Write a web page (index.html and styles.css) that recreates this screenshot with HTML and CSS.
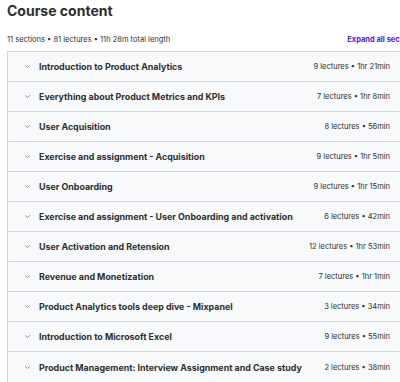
FILE: index.html
```html
<!DOCTYPE html>
<html lang="en">
<head>
    <meta charset="UTF-8">
    <meta name="viewport" content="width=device-width, initial-scale=1.0">
    <title>Course content</title>
    <link rel="stylesheet" href="styles.css">
</head>
<body>

    <h2 class="title">Course content</h2>

    <!-- Summary line + expand link -->
    <div class="summary">
        <span>11 sections • 81 lectures • 11h 28m total length</span>
        <button type="button" class="expand">Expand all sections</button>
    </div>

    <div class="sections">
        <div class="section">
            <span class="chevron"><svg width="7" height="5" viewBox="0 0 7 5"><path d="M1.2 1.4 L3.5 3.5 L5.8 1.4" fill="none" stroke="currentColor" stroke-width="1"/></svg></span>
            <span class="name">Introduction to Product Analytics</span>
            <span class="meta">9 lectures • 1hr 21min</span>
        </div>
        <div class="section">
            <span class="chevron"><svg width="7" height="5" viewBox="0 0 7 5"><path d="M1.2 1.4 L3.5 3.5 L5.8 1.4" fill="none" stroke="currentColor" stroke-width="1"/></svg></span>
            <span class="name">Everything about Product Metrics and KPIs</span>
            <span class="meta">7 lectures • 1hr 8min</span>
        </div>
        <div class="section">
            <span class="chevron"><svg width="7" height="5" viewBox="0 0 7 5"><path d="M1.2 1.4 L3.5 3.5 L5.8 1.4" fill="none" stroke="currentColor" stroke-width="1"/></svg></span>
            <span class="name">User Acquisition</span>
            <span class="meta">8 lectures • 56min</span>
        </div>
        <div class="section">
            <span class="chevron"><svg width="7" height="5" viewBox="0 0 7 5"><path d="M1.2 1.4 L3.5 3.5 L5.8 1.4" fill="none" stroke="currentColor" stroke-width="1"/></svg></span>
            <span class="name">Exercise and assignment - Acquisition</span>
            <span class="meta">9 lectures • 1hr 5min</span>
        </div>
        <div class="section">
            <span class="chevron"><svg width="7" height="5" viewBox="0 0 7 5"><path d="M1.2 1.4 L3.5 3.5 L5.8 1.4" fill="none" stroke="currentColor" stroke-width="1"/></svg></span>
            <span class="name">User Onboarding</span>
            <span class="meta">9 lectures • 1hr 15min</span>
        </div>
        <div class="section">
            <span class="chevron"><svg width="7" height="5" viewBox="0 0 7 5"><path d="M1.2 1.4 L3.5 3.5 L5.8 1.4" fill="none" stroke="currentColor" stroke-width="1"/></svg></span>
            <span class="name">Exercise and assignment - User Onboarding and activation</span>
            <span class="meta">6 lectures • 42min</span>
        </div>
        <div class="section">
            <span class="chevron"><svg width="7" height="5" viewBox="0 0 7 5"><path d="M1.2 1.4 L3.5 3.5 L5.8 1.4" fill="none" stroke="currentColor" stroke-width="1"/></svg></span>
            <span class="name">User Activation and Retension</span>
            <span class="meta">12 lectures • 1hr 53min</span>
        </div>
        <div class="section">
            <span class="chevron"><svg width="7" height="5" viewBox="0 0 7 5"><path d="M1.2 1.4 L3.5 3.5 L5.8 1.4" fill="none" stroke="currentColor" stroke-width="1"/></svg></span>
            <span class="name">Revenue and Monetization</span>
            <span class="meta">7 lectures • 1hr 1min</span>
        </div>
        <div class="section">
            <span class="chevron"><svg width="7" height="5" viewBox="0 0 7 5"><path d="M1.2 1.4 L3.5 3.5 L5.8 1.4" fill="none" stroke="currentColor" stroke-width="1"/></svg></span>
            <span class="name">Product Analytics tools deep dive - Mixpanel</span>
            <span class="meta">3 lectures • 34min</span>
        </div>
        <div class="section">
            <span class="chevron"><svg width="7" height="5" viewBox="0 0 7 5"><path d="M1.2 1.4 L3.5 3.5 L5.8 1.4" fill="none" stroke="currentColor" stroke-width="1"/></svg></span>
            <span class="name">Introduction to Microsoft Excel</span>
            <span class="meta">9 lectures • 55min</span>
        </div>
        <div class="section">
            <span class="chevron"><svg width="7" height="5" viewBox="0 0 7 5"><path d="M1.2 1.4 L3.5 3.5 L5.8 1.4" fill="none" stroke="currentColor" stroke-width="1"/></svg></span>
            <span class="name">Product Management: Interview Assignment and Case study</span>
            <span class="meta">2 lectures • 38min</span>
        </div>
    </div>

</body>
</html>
```

FILE: styles.css
```css
body {
    margin: 0;
    padding: 0 0 0 7px;
    font-family: 'Inter', 'Liberation Sans', sans-serif;
    color: #2d2f31;
    background-color: white;
    overflow: hidden;
}

.title {
    font-size: 14px;
    font-weight: 700;
    margin: 0;
    padding-top: 2px;
    height: 27px;
    line-height: 17px;
}

/* Summary row above the list */
.summary {
    display: flex;
    justify-content: space-between;
    align-items: center;
    height: 21px;
    padding-bottom: 1px;
    font-size: 7.5px;
    white-space: nowrap;
}

.expand {
    background: none;
    border: none;
    padding: 0;
    margin-right: -18px;
    font-family: inherit;
    font-size: 7.5px;
    font-weight: 700;
    color: #5624d0;
    cursor: pointer;
}

.sections {
    border: 1px solid #d1d7dc;
    border-right: none;
    width: 393px;
    box-sizing: border-box;
}

.section {
    display: flex;
    align-items: center;
    height: 30px;
    box-sizing: border-box;
    padding: 0 10px 0 16px;
    background-color: #f7f9fa;
    border-bottom: 1px solid #d1d7dc;
}

.section:last-child {
    border-bottom: none;
}

.chevron {
    display: flex;
    color: #8a8f93;
    width: 15px;
}

.name {
    flex: 1;
    font-size: 8.9px;
    font-weight: 700;
    white-space: nowrap;
}

.meta {
    font-size: 7.5px;
    white-space: nowrap;
}
```
